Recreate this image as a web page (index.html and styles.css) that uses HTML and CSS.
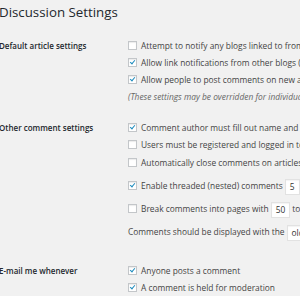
FILE: index.html
```html
<!DOCTYPE html>
<html lang="en">
<head>
  <meta charset="UTF-8">
  <title>Discussion Settings</title>
  <link rel="stylesheet" href="styles.css">
</head>
<body>
  <div class="wrap">
    <h1>Discussion Settings</h1>

    <!-- Default article settings -->
    <div class="setting">
      <div class="setting-label">Default article settings</div>
      <div class="setting-field">
        <label class="check"><span class="box"></span>Attempt to notify any blogs linked to from the article</label>
        <label class="check"><span class="box on"></span>Allow link notifications from other blogs (pingbacks and trackbacks) on new articles</label>
        <label class="check"><span class="box on"></span>Allow people to post comments on new articles</label>
        <p class="note">(These settings may be overridden for individual articles.)</p>
      </div>
    </div>

    <!-- Other comment settings -->
    <div class="setting">
      <div class="setting-label">Other comment settings</div>
      <div class="setting-field">
        <label class="check"><span class="box on"></span>Comment author must fill out name and email</label>
        <label class="check"><span class="box"></span>Users must be registered and logged in to comment</label>
        <label class="check check-tall"><span class="box"></span>Automatically close comments on articles older than</label>
        <label class="check check-input"><span class="box on"></span>Enable threaded (nested) comments <span class="field field-num">5</span> levels deep</label>
        <label class="check check-input"><span class="box"></span>Break comments into pages with <span class="field field-num">50</span> top level comments per page</label>
        <div class="check check-input">Comments should be displayed with the <span class="field field-select">older</span> comments at the top of each page</div>
      </div>
    </div>

    <!-- E-mail me whenever -->
    <div class="setting">
      <div class="setting-label">E-mail me whenever</div>
      <div class="setting-field">
        <label class="check"><span class="box on"></span>Anyone posts a comment</label>
        <label class="check"><span class="box on"></span>A comment is held for moderation</label>
      </div>
    </div>
  </div>
</body>
</html>
```

FILE: styles.css
```css
/* Base */
body {
  margin: 0;
  background-color: #f1f1f1;
  font-family: "Open Sans", "Liberation Sans", sans-serif;
  font-size: 8.4px;
  color: #444;
  overflow: hidden;
  height: 296px;
}

.wrap {
  margin-left: -1px;
}

h1 {
  font-size: 13.3px;
  font-weight: 400;
  line-height: 19px;
  color: #23282d;
  margin: 3px 0 15px;
}

/* Settings rows */
.setting {
  display: flex;
  margin-bottom: 14px;
}

.setting:nth-of-type(2) {
  margin-bottom: 19px;
}

.setting-label {
  width: 129px;
  flex-shrink: 0;
  font-size: 8px;
  font-weight: 600;
  color: #23282d;
  line-height: 17px;
}

.setting-field {
  display: flex;
  flex-direction: column;
  min-width: 0;
}

.check {
  display: flex;
  align-items: center;
  height: 17px;
  white-space: nowrap;
}

.check-tall {
  height: 18px;
}

.check-input {
  height: 23px;
}

.check-tall + .check-input {
  margin-top: 3px;
}

/* Checkbox */
.box {
  width: 9px;
  height: 9px;
  flex-shrink: 0;
  box-sizing: border-box;
  border: 1px solid #c3c6c9;
  background-color: #fff;
  box-shadow: inset 0 1px 1px rgba(0, 0, 0, 0.08);
  margin-right: 4px;
  position: relative;
}

.box.on::after {
  content: "";
  position: absolute;
  left: 2px;
  top: 0px;
  width: 2px;
  height: 4px;
  border-right: 1.3px solid #1e8cbe;
  border-bottom: 1.3px solid #1e8cbe;
  transform: rotate(40deg);
}

.note {
  margin: 0;
  line-height: 17px;
  font-style: italic;
  color: #666;
  white-space: nowrap;
}

/* Text inputs */
.field {
  display: inline-block;
  box-sizing: border-box;
  height: 16px;
  line-height: 14px;
  padding: 0 4px;
  margin: 3px 2px 0;
  background-color: #fff;
  border: 1px solid #e2e2e2;
  box-shadow: inset 0 1px 1px rgba(0, 0, 0, 0.05);
  color: #333;
}

.field-num {
  width: 60px;
}

.field-select {
  width: 50px;
}
```
